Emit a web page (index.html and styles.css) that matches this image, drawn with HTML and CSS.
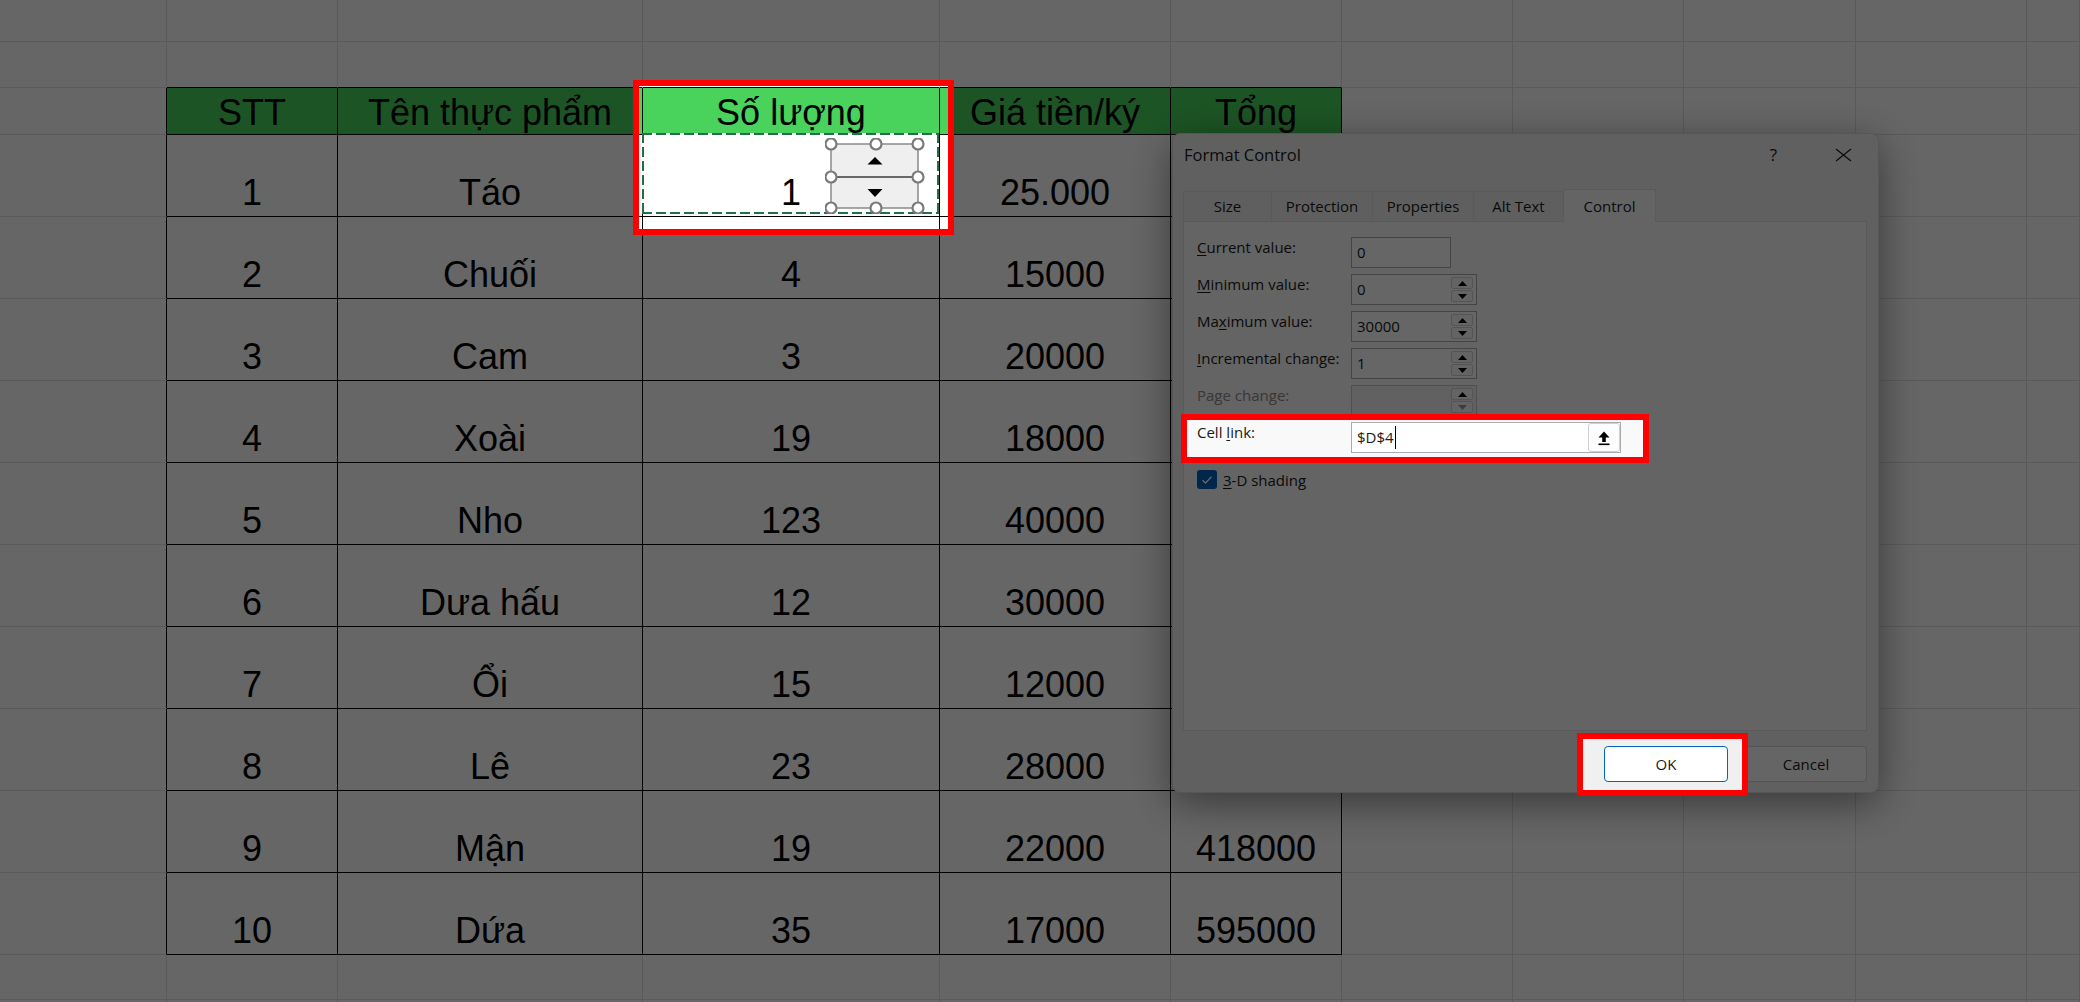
FILE: index.html
```html
<!DOCTYPE html>
<html lang="vi">
<head>
  <meta charset="UTF-8">
  <title>Format Control - Spin Button</title>
  <link rel="stylesheet" href="styles.css">
</head>
<body>
  <div class="screen">
    <div class="sheet">
      <!-- row 1 -->
      <div class="c"></div><div class="c"></div><div class="c"></div><div class="c"></div><div class="c"></div><div class="c"></div><div class="c"></div><div class="c"></div><div class="c"></div><div class="c"></div><div class="c"></div>
      <!-- row 2 -->
      <div class="c"></div><div class="c top"></div><div class="c top"></div><div class="c top"></div><div class="c top"></div><div class="c top"></div><div class="c"></div><div class="c"></div><div class="c"></div><div class="c"></div><div class="c"></div>
      <!-- header -->
      <div class="c edge"></div>
      <div class="c t th">STT</div>
      <div class="c t th">Tên thực phẩm</div>
      <div class="c t th">Số lượng</div>
      <div class="c t th">Giá tiền/ký</div>
      <div class="c t th">Tổng</div>
      <div class="c"></div><div class="c"></div><div class="c"></div><div class="c"></div><div class="c"></div>
      <!-- data (Tổng for rows 1-8 sits under the dialog) -->
      <div class="c edge"></div>
      <div class="c t">1</div>
      <div class="c t">Táo</div>
      <div class="c t linked">
        <span>1</span>
        <div class="ants"></div>
        <svg class="spinner" width="100" height="76" viewBox="0 0 100 76">
          <rect x="6" y="6" width="87" height="64" fill="#efefef" stroke="#8a8a8a" stroke-width="1.5"/>
          <line x1="6" y1="39" x2="93" y2="39" stroke="#3c3c3c" stroke-width="1.5"/>
          <polygon points="42.5,26.5 57.5,26.5 50,19" fill="#000"/>
          <polygon points="42.5,51 57.5,51 50,59" fill="#000"/>
          <g fill="#fff" stroke="#7a7a7a" stroke-width="2.2">
            <circle cx="6" cy="6" r="5.5"/><circle cx="51" cy="6" r="5.5"/><circle cx="93" cy="6" r="5.5"/>
            <circle cx="6" cy="39" r="5.5"/><circle cx="93" cy="39" r="5.5"/>
            <circle cx="6" cy="70" r="5.5"/><circle cx="51" cy="70" r="5.5"/><circle cx="93" cy="70" r="5.5"/>
          </g>
        </svg>
      </div>
      <div class="c t">25.000</div>
      <div class="c t"></div>
      <div class="c"></div><div class="c"></div><div class="c"></div><div class="c"></div><div class="c"></div>

      <div class="c edge"></div>
      <div class="c t">2</div><div class="c t">Chuối</div><div class="c t">4</div><div class="c t">15000</div><div class="c t"></div>
      <div class="c"></div><div class="c"></div><div class="c"></div><div class="c"></div><div class="c"></div>

      <div class="c edge"></div>
      <div class="c t">3</div><div class="c t">Cam</div><div class="c t">3</div><div class="c t">20000</div><div class="c t"></div>
      <div class="c"></div><div class="c"></div><div class="c"></div><div class="c"></div><div class="c"></div>

      <div class="c edge"></div>
      <div class="c t">4</div><div class="c t">Xoài</div><div class="c t">19</div><div class="c t">18000</div><div class="c t"></div>
      <div class="c"></div><div class="c"></div><div class="c"></div><div class="c"></div><div class="c"></div>

      <div class="c edge"></div>
      <div class="c t">5</div><div class="c t">Nho</div><div class="c t">123</div><div class="c t">40000</div><div class="c t"></div>
      <div class="c"></div><div class="c"></div><div class="c"></div><div class="c"></div><div class="c"></div>

      <div class="c edge"></div>
      <div class="c t">6</div><div class="c t">Dưa hấu</div><div class="c t">12</div><div class="c t">30000</div><div class="c t"></div>
      <div class="c"></div><div class="c"></div><div class="c"></div><div class="c"></div><div class="c"></div>

      <div class="c edge"></div>
      <div class="c t">7</div><div class="c t">Ổi</div><div class="c t">15</div><div class="c t">12000</div><div class="c t"></div>
      <div class="c"></div><div class="c"></div><div class="c"></div><div class="c"></div><div class="c"></div>

      <div class="c edge"></div>
      <div class="c t">8</div><div class="c t">Lê</div><div class="c t">23</div><div class="c t">28000</div><div class="c t"></div>
      <div class="c"></div><div class="c"></div><div class="c"></div><div class="c"></div><div class="c"></div>

      <div class="c edge"></div>
      <div class="c t">9</div><div class="c t">Mận</div><div class="c t">19</div><div class="c t">22000</div><div class="c t">418000</div>
      <div class="c"></div><div class="c"></div><div class="c"></div><div class="c"></div><div class="c"></div>

      <div class="c edge"></div>
      <div class="c t">10</div><div class="c t">Dứa</div><div class="c t">35</div><div class="c t">17000</div><div class="c t">595000</div>
      <div class="c"></div><div class="c"></div><div class="c"></div><div class="c"></div><div class="c"></div>
      <!-- rows below -->
      <div class="c"></div><div class="c"></div><div class="c"></div><div class="c"></div><div class="c"></div><div class="c"></div><div class="c"></div><div class="c"></div><div class="c"></div><div class="c"></div><div class="c"></div>
      <div class="c"></div><div class="c"></div><div class="c"></div><div class="c"></div><div class="c"></div><div class="c"></div><div class="c"></div><div class="c"></div><div class="c"></div><div class="c"></div><div class="c"></div>
    </div>

    <div class="dialog">
      <div class="dlg-title">
        <span class="dlg-name">Format Control</span>
        <span class="help">?</span>
        <svg class="close" width="17" height="14" viewBox="0 0 17 14">
          <path d="M1 1 L16 13 M16 1 L1 13" stroke="#1a1a1a" stroke-width="1.2" fill="none"/>
        </svg>
      </div>
      <div class="tabs">
        <div class="tab tab-size">Size</div>
        <div class="tab tab-wide">Protection</div>
        <div class="tab tab-wide">Properties</div>
        <div class="tab tab-alt">Alt Text</div>
        <div class="tab active">Control</div>
      </div>
      <div class="panel">
        <div class="form">
          <label class="lbl"><u>C</u>urrent value:</label>
          <div class="field plain"><span class="val">0</span></div>

          <label class="lbl"><u>M</u>inimum value:</label>
          <div class="field num">
            <span class="val">0</span>
            <div class="arrows">
              <div class="arr"><svg width="9" height="5" viewBox="0 0 9 5"><polygon points="0,5 9,5 4.5,0" fill="#000"/></svg></div>
              <div class="arr"><svg width="9" height="5" viewBox="0 0 9 5"><polygon points="0,0 9,0 4.5,5" fill="#000"/></svg></div>
            </div>
          </div>

          <label class="lbl">Ma<u>x</u>imum value:</label>
          <div class="field num">
            <span class="val">30000</span>
            <div class="arrows">
              <div class="arr"><svg width="9" height="5" viewBox="0 0 9 5"><polygon points="0,5 9,5 4.5,0" fill="#000"/></svg></div>
              <div class="arr"><svg width="9" height="5" viewBox="0 0 9 5"><polygon points="0,0 9,0 4.5,5" fill="#000"/></svg></div>
            </div>
          </div>

          <label class="lbl"><u>I</u>ncremental change:</label>
          <div class="field num">
            <span class="val">1</span>
            <div class="arrows">
              <div class="arr"><svg width="9" height="5" viewBox="0 0 9 5"><polygon points="0,5 9,5 4.5,0" fill="#000"/></svg></div>
              <div class="arr"><svg width="9" height="5" viewBox="0 0 9 5"><polygon points="0,0 9,0 4.5,5" fill="#000"/></svg></div>
            </div>
          </div>

          <label class="lbl disabled">Page change:</label>
          <div class="field num off">
            <span class="val"></span>
            <div class="arrows">
              <div class="arr"><svg width="9" height="5" viewBox="0 0 9 5"><polygon points="0,5 9,5 4.5,0" fill="#000"/></svg></div>
              <div class="arr"><svg width="9" height="5" viewBox="0 0 9 5"><polygon points="0,0 9,0 4.5,5" fill="#9a9a9a"/></svg></div>
            </div>
          </div>

          <label class="lbl">Cell <u>l</u>ink:</label>
          <div class="field ref">
            <span class="val">$D$4<i class="caret"></i></span>
            <div class="ref-btn">
              <svg width="14" height="16" viewBox="0 0 14 16">
                <polygon points="1.5,7.5 7,1.5 12.5,7.5" fill="#000"/>
                <rect x="5.2" y="7" width="3.6" height="5" fill="#000"/>
                <rect x="1.5" y="13.5" width="11" height="1.6" fill="#000"/>
              </svg>
            </div>
          </div>
        </div>
        <div class="shade">
          <span class="check">
            <svg width="12" height="10" viewBox="0 0 12 10"><path d="M1.5 5.2 L4.5 8 L10.5 1.8" stroke="#fff" stroke-width="1.3" fill="none"/></svg>
          </span>
          <span class="lbl"><u>3</u>-D shading</span>
        </div>
      </div>
      <div class="buttons">
        <button class="btn primary">OK</button>
        <button class="btn">Cancel</button>
      </div>
    </div>

    <div class="dim"></div>
    <div class="mark mark-qty"></div>
    <div class="mark mark-link"></div>
    <div class="mark mark-ok"></div>
  </div>
</body>
</html>
```

FILE: styles.css
```css
html, body {
  margin: 0;
  padding: 0;
}
body {
  width: 2080px;
  height: 1002px;
  overflow: hidden;
  background: #fff;
}
.screen {
  position: relative;
  width: 2080px;
  height: 1002px;
}

/* spreadsheet */
.sheet {
  display: grid;
  grid-template-columns: 167px 171px 305px 297px 231px 171px 171px 171px 172px 171px 53px;
  grid-template-rows: 42px 46px 47px repeat(10, 82px) 45px 10px;
  background: #fff;
}
.c {
  box-sizing: border-box;
  border-right: 1px solid #e1e1e1;
  border-bottom: 1px solid #e1e1e1;
}
.edge {
  border-right-color: #000;
}
.top {
  border-bottom-color: #000;
}
.t {
  border-right: 1px solid #000;
  border-bottom: 1px solid #000;
  display: flex;
  align-items: flex-end;
  justify-content: center;
  padding-bottom: 3px;
  font-family: "Liberation Sans", Arial, sans-serif;
  font-size: 36px;
  line-height: 1.15;
  color: #000;
  white-space: nowrap;
}
.th {
  background: #4ad35c;
  padding-bottom: 1px;
}
.linked {
  position: relative;
}
.ants {
  position: absolute;
  top: -2px;
  left: -1px;
  right: 0;
  bottom: 2px;
  background:
    repeating-linear-gradient(90deg, #1f7246 0 10px, #fff 10px 14px) top / 100% 2px no-repeat,
    repeating-linear-gradient(90deg, #1f7246 0 10px, #fff 10px 14px) bottom / 100% 2px no-repeat,
    repeating-linear-gradient(180deg, #1f7246 0 10px, #fff 10px 14px) left / 2px 100% no-repeat,
    repeating-linear-gradient(180deg, #1f7246 0 10px, #fff 10px 14px) right / 2px 100% no-repeat;
}
.spinner {
  position: absolute;
  left: 182px;
  top: 3px;
}

/* dialog */
.dialog {
  position: absolute;
  left: 1172px;
  top: 133px;
  width: 707px;
  height: 660px;
  box-sizing: border-box;
  padding: 0 11px 10px 10px;
  background: #f0f0f0;
  border: 1px solid #d6d6d6;
  border-radius: 8px;
  box-shadow: 0 10px 40px rgba(0, 0, 0, 0.45);
  font-family: "Open Sans", "Noto Sans", sans-serif;
  font-size: 15px;
  color: #1a1a1a;
  z-index: 2;
}
.dlg-title {
  height: 41px;
  display: flex;
  align-items: center;
}
.dlg-name {
  flex: 1;
  font-size: 16.5px;
  padding-left: 1px;
}
.help {
  font-size: 17px;
  margin-right: 58px;
}
.close {
  margin-right: 15px;
}
.tabs {
  display: flex;
  align-items: flex-end;
  height: 32px;
  margin-top: 14px;
}
.tab {
  box-sizing: border-box;
  height: 30px;
  line-height: 29px;
  text-align: center;
  background: #ededed;
  border: 1px solid #e2e2e2;
  border-bottom: none;
  margin-right: -1px;
}
.tab-size {
  width: 89px;
}
.tab-wide {
  width: 102px;
}
.tab-alt {
  width: 91px;
}
.tab.active {
  width: 93px;
  height: 33px;
  padding-top: 2px;
  background: #f9f9f9;
  position: relative;
  margin-bottom: -1px;
}
.panel {
  box-sizing: border-box;
  height: 510px;
  padding: 15px 13px;
  background: #f9f9f9;
  border: 1px solid #e2e2e2;
}
.form {
  display: grid;
  grid-template-columns: 154px auto;
  grid-auto-rows: 31px;
  row-gap: 6px;
  justify-items: start;
}
.lbl {
  line-height: 20px;
}
.lbl u {
  text-underline-offset: 2px;
}
.disabled {
  color: #8c8c8c;
}
.field {
  box-sizing: border-box;
  height: 31px;
  border: 1px solid #ababab;
  background: #fff;
  display: flex;
  align-items: center;
}
.val {
  flex: 1;
  padding-left: 5px;
  line-height: 27px;
  display: flex;
  align-items: center;
}
.plain {
  width: 100px;
}
.num {
  width: 126px;
}
.off {
  background: #f3f3f3;
  border-color: #c6c6c6;
}
.arrows {
  width: 22px;
  height: 100%;
  box-sizing: border-box;
  padding: 2px 0;
  margin-right: 3px;
  display: flex;
  flex-direction: column;
  gap: 1px;
}
.arr {
  flex: 1;
  box-sizing: border-box;
  border: 1px solid #d3d3d3;
  border-radius: 2px;
  background: #fbfbfb;
  display: flex;
  align-items: center;
  justify-content: center;
}
.ref {
  width: 270px;
}
.caret {
  display: inline-block;
  width: 1px;
  height: 23px;
  background: #000;
  margin-left: 1px;
}
.ref-btn {
  width: 32px;
  height: 29px;
  box-sizing: border-box;
  border: 1px solid #cfcfcf;
  border-radius: 3px;
  background: #fdfdfd;
  display: flex;
  align-items: center;
  justify-content: center;
}
.shade {
  display: flex;
  align-items: flex-start;
  gap: 6px;
  margin-top: 17px;
}
.check {
  width: 20px;
  height: 19px;
  border-radius: 3px;
  background: #005fb8;
  display: flex;
  align-items: center;
  justify-content: center;
}
.buttons {
  display: flex;
  justify-content: flex-end;
  gap: 17px;
  margin-top: 15px;
}
.btn {
  width: 122px;
  height: 36px;
  border: 1px solid #d0d0d0;
  border-radius: 4px;
  background: #fdfdfd;
  font-family: "Open Sans", "Noto Sans", sans-serif;
  font-size: 15px;
  color: #1a1a1a;
  padding: 0;
}
.btn.primary {
  width: 124px;
  background: #fff;
  border-color: #0067c0;
}

/* tutorial spotlight */
.dim {
  position: absolute;
  left: 0;
  top: 0;
  width: 2080px;
  height: 1002px;
  background: rgba(0, 0, 0, 0.6);
  clip-path: path(evenodd, "M0 0H2080V1002H0Z M633 80H954V235H633Z M1181 414H1649V463H1181Z M1577 733H1748V796H1577Z");
  z-index: 5;
}
.mark {
  position: absolute;
  box-sizing: border-box;
  border: 6px solid #ff0000;
  z-index: 6;
}
.mark-qty {
  left: 633px;
  top: 80px;
  width: 321px;
  height: 155px;
}
.mark-link {
  left: 1181px;
  top: 414px;
  width: 468px;
  height: 49px;
}
.mark-ok {
  left: 1577px;
  top: 733px;
  width: 171px;
  height: 63px;
}
```
